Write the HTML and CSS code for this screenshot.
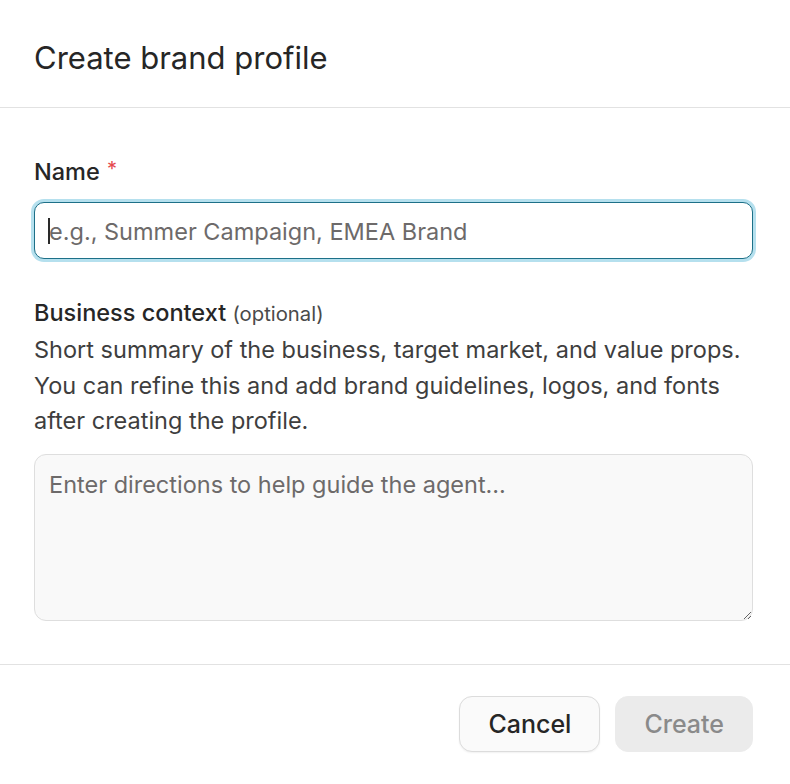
FILE: index.html
```html
<!DOCTYPE html>
<html lang="en">
<head>
<meta charset="utf-8">
<title>Create brand profile</title>
<link rel="stylesheet" href="styles.css">
</head>
<body>
<div class="dialog">
  <header class="dialog-header">
    <h1 class="dialog-title">Create brand profile</h1>
  </header>
  <main class="dialog-body">
    <div class="field">
      <label class="label" for="name">Name <span class="req">*</span></label>
      <div class="input-wrap">
        <span class="caret"></span>
        <input id="name" class="input" type="text" placeholder="e.g., Summer Campaign, EMEA Brand">
      </div>
    </div>
    <div class="field field-context">
      <div class="label">Business context <span class="optional">(optional)</span></div>
      <p class="help">Short summary of the business, target market, and value props. You can refine this and add brand guidelines, logos, and fonts after creating the profile.</p>
      <textarea class="textarea" placeholder="Enter directions to help guide the agent..."></textarea>
    </div>
  </main>
  <footer class="dialog-footer">
    <button class="btn btn-secondary" type="button">Cancel</button>
    <button class="btn btn-primary" type="button" disabled>Create</button>
  </footer>
</div>
</body>
</html>
```

FILE: styles.css
```css
* { box-sizing: border-box; }
html, body { margin: 0; padding: 0; background: #ffffff; }
body {
  font-family: "Inter", "Liberation Sans", sans-serif;
  color: #2a2a2a;
  width: 790px;
  height: 784px;
  overflow: hidden;
}
.dialog { display: flex; flex-direction: column; }
.dialog-header {
  height: 108px;
  padding: 0 37px 0 34px;
  border-bottom: 1px solid #e2e2e2;
  display: flex;
  align-items: flex-start;
}
.dialog-title {
  margin: 37px 0 0;
  font-size: 31px;
  font-weight: 400;
  line-height: 42px;
  color: #262626;
}
.dialog-body {
  padding: 46px 37px 0 34px;
  height: 557px;
  border-bottom: 1px solid #e2e2e2;
}
.field { display: flex; flex-direction: column; }
.label {
  font-size: 23.5px;
  font-weight: 500;
  line-height: 36px;
  color: #262626;
}
.req { color: #e5484d; font-weight: 400; position: relative; top: -4px; font-size: 20px; margin-left: 1px; }
.optional { font-size: 20.3px; font-weight: 400; color: #4a4a4a; }
.input-wrap {
  position: relative;
  margin-top: 11px;
  height: 57px;
  border: 1px solid #1d7088;
  border-radius: 10px;
  box-shadow: 0 0 0 3px #b5e0ee;
  background: #fff;
}
.input {
  width: 100%;
  height: 100%;
  border: none;
  outline: none;
  background: transparent;
  padding: 2px 14px 0;
  font-family: inherit;
  font-size: 23.5px;
  color: #2a2a2a;
}
.input::placeholder { color: #6d6a6a; }
.caret {
  position: absolute;
  left: 13px;
  top: 15px;
  width: 2px;
  height: 26px;
  background: #2a2a2a;
}
.field-context { margin-top: 36px; }
.help {
  margin: 0;
  font-size: 23.5px;
  line-height: 35.5px;
  color: #3e3e3e;
}
.textarea {
  margin-top: 15px;
  height: 167px;
  width: 100%;
  border: 1px solid #dedede;
  border-radius: 12px;
  background: #f9f9f9;
  padding: 13px 14px 11px;
  font-family: inherit;
  font-size: 23.5px;
  line-height: 34px;
  color: #2a2a2a;
  resize: vertical;
  outline: none;
}
.textarea::placeholder { color: #6d6a6a; }
.dialog-footer {
  padding: 31px 37px 0 34px;
  display: flex;
  justify-content: flex-end;
  gap: 15px;
}
.btn {
  height: 56px;
  border-radius: 13px;
  font-family: inherit;
  font-size: 25px;
  font-weight: 500;
  padding: 0 28px;
  cursor: pointer;
}
.btn-secondary {
  background: #fafafa;
  border: 1px solid #dcdcdc;
  color: #262626;
  box-shadow: 0 1px 2px rgba(0,0,0,0.06);
}
.btn-primary {
  background: #ebebeb;
  border: 1px solid #ebebeb;
  color: #8a8a8a;
}
```
